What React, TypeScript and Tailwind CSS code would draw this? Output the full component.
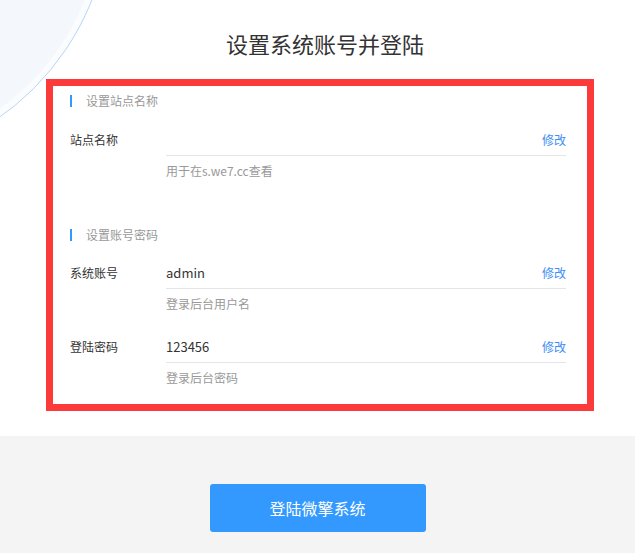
import React from "react";

interface FieldRowProps {
    label: string;
    value?: string;
    hint: string;
    className?: string;
}

function SectionHeader({ title, className = "" }: { title: string; className?: string }) {
    return (
        <div className={`flex items-center h-[14px] ${className}`}>
            <span className="w-[2px] h-[12px] bg-[#3399ff]" />
            <span className="ml-[14px] text-[12px] leading-[14px] text-[#999]">{title}</span>
        </div>
    );
}

function FieldRow({ label, value, hint, className = "" }: FieldRowProps) {
    return (
        <div className={`flex items-start ${className}`}>
            <div className="w-[96px] shrink-0 text-[12px] leading-[31px] text-[#333]">{label}</div>
            <div className="w-[400px]">
                <div className="flex items-center justify-between h-[32px] border-b border-[#e5e5e5]">
                    <span className="text-[13px] text-[#333]">{value}</span>
                    <button className="text-[12px] text-[#3d8ef6]">修改</button>
                </div>
                <div className="mt-[5px] text-[12px] leading-[20px] text-[#999]">{hint}</div>
            </div>
        </div>
    );
}

export default function App() {
    return (
        <div className="min-h-screen bg-white font-['Noto_Sans_CJK_SC','Noto_Sans',sans-serif]">
            {/* top white area */}
            <div className="relative h-[436px] overflow-hidden bg-white">
                {/* decorative circle */}
                <div className="absolute left-[-415px] top-[-360px] w-[526px] h-[526px] rounded-full border border-[#b5d5f7] bg-[#fafcfe] p-[6px]">
                    <div className="w-full h-full rounded-full bg-[#f4f7fc]" />
                </div>

                <div className="relative pt-[29px]">
                    <h1 className="pl-[15px] text-center text-[22px] leading-[28px] text-[#333]">设置系统账号并登陆</h1>

                    <div className="ml-[46px] mt-[22px] w-[548px] border-[7px] border-[#fd3a3a] bg-white pl-[17px] pt-[8px] pb-[16px]">
                        <SectionHeader title="设置站点名称" />
                        <FieldRow className="mt-[16px]" label="站点名称" hint="用于在s.we7.cc查看" />

                        <SectionHeader className="mt-[47px]" title="设置账号密码" />
                        <FieldRow className="mt-[15px]" label="系统账号" value="admin" hint="登录后台用户名" />
                        <FieldRow className="mt-[17px]" label="登陆密码" value="123456" hint="登录后台密码" />
                    </div>
                </div>
            </div>

            {/* bottom gray area */}
            <div className="bg-[#f4f4f4] pt-[48px] pb-[48px] flex justify-center">
                <button className="w-[216px] h-[48px] rounded-[3px] bg-[#3399ff] text-[16px] text-white">登陆微擎系统</button>
            </div>
        </div>
    );
}
